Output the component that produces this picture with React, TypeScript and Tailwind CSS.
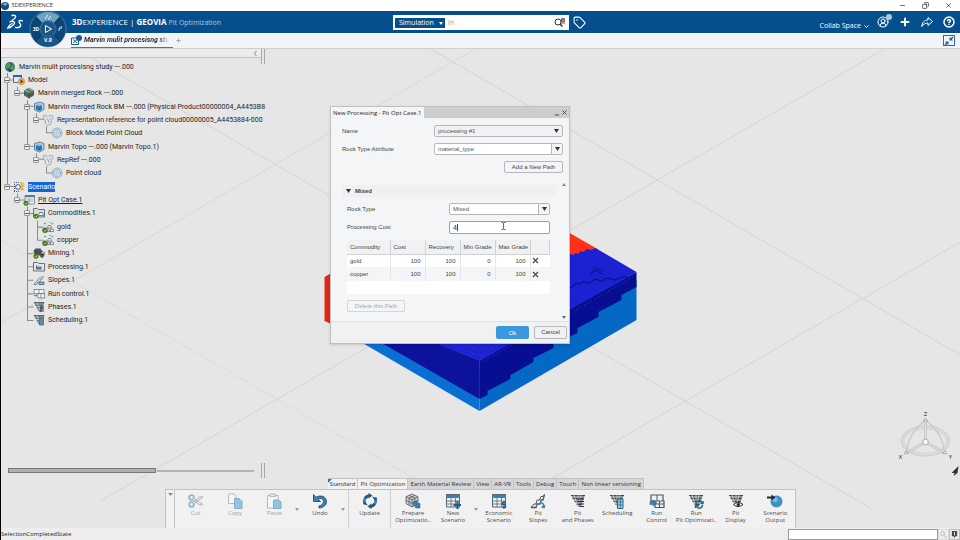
import React from "react";
import { Minus, Copy, X, Plus, Tag, CircleUserRound, CircleHelp } from "lucide-react";

type IconProps = { name: string; className?: string };

function Check() {
  return (
    <g>
      <circle cx="3" cy="9.3" r="2.5" fill="#3d7a1c" />
      <path d="M1.8 9.3l1 1 1.6-2" stroke="#d6e85a" strokeWidth=".9" fill="none" />
    </g>
  );
}

function TreeIcon({ name, className }: IconProps) {
  return (
    <svg viewBox="0 0 12 12" className={className} aria-hidden="true">
      {name === "globe" && (
        <g>
          <circle cx="6" cy="6" r="5" fill="#2b6e8c" />
          <path d="M2 4l3-2 2 2-2 3-3 0zM7 6l3-3 1 4-3 3-2-1z" fill="#5f9a3c" />
          <path d="M4 8l2 3 2-2z" fill="#16384a" />
        </g>
      )}
      {name === "model" && (
        <g>
          <path d="M.5 1.5h8v7h-8z" fill="#dcebf7" stroke="#3b78b4" />
          <path d="M0 1h9v2H0z" fill="#1e63c0" />
          <circle cx="8.5" cy="7.5" r="3.2" fill="#f6b13c" stroke="#c27a1c" strokeWidth=".6" />
          <path d="M7.5 5.6l3 1.9-3 1.9z" fill="#27446a" />
        </g>
      )}
      {name === "rock" && (
        <g>
          <path d="M6 .8l5 2.700v5L6 11.400 1 8.500v-5z" fill="#5c6b60" />
          <path d="M6 .8l5 2.700L6 6 1 3.500z" fill="#87a87c" />
          <path d="M6 6v5.400M1 6l5 2.700L11 6M3.500 2.200l5 2.600" stroke="#27332d" strokeWidth=".7" fill="none" />
          <circle cx="4" cy="7" r="1.700" fill="#2f7595" />
        </g>
      )}
      {name === "cube" && (
        <g>
          <path d="M1.500 2.500L7 1l4 1.500v6L6.500 11 1.500 9z" fill="#b9cedc" stroke="#566f80" strokeWidth=".8" />
          <path d="M3 4h6v4.500L6.500 10 3 8.500z" fill="#2878b4" />
          <path d="M3 4l3-1.500L9 4 6 5.200z" fill="#8cc4e8" />
        </g>
      )}
      {name === "rep" && (
        <g fill="#e3e6e8" stroke="#8f979d" strokeWidth=".7">
          <path d="M1.500 1.500l2.500-.5 1.500 2L8 1.500h2.500L11 4.500 9 7v3l-4 1.500L3 9.500l1-2.500-2-1z" />
          <path d="M4 4.500l2.500 2L9.500 4M6.500 6.500V9" fill="none" />
        </g>
      )}
      {name === "cloud" && (
        <g>
          <circle cx="6" cy="6" r="5" fill="#d5e1ea" stroke="#7b9aaf" strokeWidth=".7" />
          <circle cx="6" cy="6" r="3.400" fill="none" stroke="#5f87a3" strokeWidth="1" strokeDasharray="1 1" />
          <path d="M3.500 6h5M6 3.500v5" stroke="#84a5ba" strokeWidth=".8" strokeDasharray="1 1" />
        </g>
      )}
      {name === "scenario" && (
        <g>
          <path d="M1 1.500h5M1 10.500h5M1.500 1v10" stroke="#4c5a68" strokeDasharray="1 1" fill="none" />
          <circle cx="5" cy="6" r="2.400" fill="#e8f0f8" stroke="#2867a5" />
          <path d="M7 1l4 .5-1 2 2 .5-2 2.500 1.500 2L8 10 7 7l1.500-1z" fill="#f0b43c" />
        </g>
      )}
      {name === "case" && (
        <g>
          <path d="M2 1.500h9.500v8.500H2z" fill="#eef2f4" stroke="#6c7b86" strokeWidth=".8" />
          <path d="M2 1h10v2.200H2z" fill="#4c7f9c" />
          <path d="M3.500 5h7M3.500 7h7M6 4v5" stroke="#8b98a1" strokeWidth=".7" />
          <Check />
        </g>
      )}
      {name === "commodity" && (
        <g>
          <path d="M.5 1.500h4l1 1h6V10H.5z" fill="#d8dee2" stroke="#59666f" strokeWidth=".9" />
          <path d="M5.500 8.500l1-3h3l1 3z" fill="#fff" stroke="#39708f" strokeWidth=".8" />
          <Check />
        </g>
      )}
      {name === "ingot" && (
        <g fill="#eceff1" stroke="#56656f" strokeWidth=".7">
          <path d="M5.500 7l.8-2.500h2.500L9.600 7zM3.500 10.500L4.300 8H7l.8 2.500zM8 10.500L8.800 8h2.400l.8 2.500z" />
          <path d="M2 2.500h2M3 1.500v2M7 1.500h1.600M9.500 2.500h1.500M10.300 1.500v2" stroke="#3d93a0" />
          <Check />
        </g>
      )}
      {name === "truck" && (
        <g>
          <path d="M.5 4l2-2.500h5L9 4l2.500 1v3.500H2z" fill="#4b4f52" />
          <path d="M8.500 5h2.500v1.500H8.500z" fill="#b9c6ce" />
          <circle cx="9" cy="9" r="1.700" fill="#2a2d2f" />
          <circle cx="9" cy="9" r=".6" fill="#ccc" />
          <Check />
        </g>
      )}
      {name === "processing" && (
        <g>
          <path d="M.5 1.500h4l1 1h6V10H.5z" fill="#e3e7ea" stroke="#59666f" strokeWidth=".9" />
          <path d="M3 8.500v-4h1.500v2l2-1.500v1.500l2-1.500v3.500z" fill="#54738a" />
        </g>
      )}
      {name === "slopes" && (
        <g fill="none" stroke="#6c7c88" strokeWidth=".9">
          <path d="M.8 10.500h3l1-2.500h2l1-3h1.500l1-3M.8 10.500L8 2.500" />
          <path d="M6 8h5v2.500H6z" fill="#8fb6ce" stroke="#41708f" />
        </g>
      )}
      {name === "run" && (
        <g fill="#f3f6f8" stroke="#6b7b88" strokeWidth=".8">
          <path d="M1 1.500h10v4H1zM5 5.500h6.500V10H5z" />
          <path d="M6 1.500v4M8 5.500V10" />
          <path d="M1 7.500h3M2.700 6.200L4 7.500 2.700 8.800" stroke="#3f7ca6" fill="none" />
        </g>
      )}
      {(name === "phases" || name === "scheduling") && (
        <g>
          <path d="M.5 1h11L8.500 10.500H6z" fill="#56636c" />
          <path d="M1.500 3h9M3 5.500h7M5 8h4M4 1.500l3 8" stroke="#d5dbdf" strokeWidth=".7" />
          {name === "scheduling" ? (
            <path d="M6.500 4h4v7h-4z" fill="#5e8dab" stroke="#2f5a77" strokeWidth=".6" />
          ) : (
            <path d="M7 6h4M7 8h4M7 10h4" stroke="#2d3438" strokeWidth="1" />
          )}
        </g>
      )}
    </svg>
  );
}

type Node = { label: string; icon: string; pad: string; open?: boolean; state?: "selected" | "active" };

const nodes: Node[] = [
  { label: "Marvin mulit procesisng study ---.000", icon: "globe", pad: "pl-[3px]" },
  { label: "Model", icon: "model", pad: "pl-[3px]", open: true },
  { label: "Marvin merged Rock ---.000", icon: "rock", pad: "pl-[13px]", open: true },
  { label: "Marvin merged Rock BM ---.000 (Physical Product00000004_A4453B8", icon: "cube", pad: "pl-[23px]", open: true },
  { label: "Representation reference for point cloud00000005_A4453884-000", icon: "rep", pad: "pl-8", open: true },
  { label: "Block Model Point Cloud", icon: "cloud", pad: "pl-[50px]" },
  { label: "Marvin Topo ---.000 (Marvin Topo.1)", icon: "cube", pad: "pl-[23px]", open: true },
  { label: "RepRef ---.000", icon: "rep", pad: "pl-8", open: true },
  { label: "Point cloud", icon: "cloud", pad: "pl-[50px]" },
  { label: "Scenario", icon: "scenario", pad: "pl-[3px]", open: true, state: "selected" },
  { label: "Pit Opt Case.1", icon: "case", pad: "pl-[13px]", open: true, state: "active" },
  { label: "Commodities.1", icon: "commodity", pad: "pl-[23px]", open: true },
  { label: "gold", icon: "ingot", pad: "pl-[41px]" },
  { label: "copper", icon: "ingot", pad: "pl-[41px]" },
  { label: "Mining.1", icon: "truck", pad: "pl-8" },
  { label: "Processing.1", icon: "processing", pad: "pl-8" },
  { label: "Slopes.1", icon: "slopes", pad: "pl-8" },
  { label: "Run control.1", icon: "run", pad: "pl-8" },
  { label: "Phases.1", icon: "phases", pad: "pl-8" },
  { label: "Scheduling.1", icon: "scheduling", pad: "pl-8" },
];

const stateClass = {
  selected: "bg-[#1565d8] text-white",
  active: "underline",
  none: "",
};

function Tree() {
  return (
    <div className="relative h-[267px] shrink-0">
      <svg className="absolute left-0 top-0 h-[267px] w-[80px]" viewBox="0 0 80 266" preserveAspectRatio="none" aria-hidden="true">
        <path
          d="M6.500 13V126M6.500 20h8M16.500 27v6M16.500 33h8M26.500 40v46M26.500 46h8M26.500 86h8M35.500 53v6h8M45.500 66v6.500h7M35.500 93v6h8M45.500 106v6.500h7M6.500 126h8M16.500 133v6.500h8M26.500 146v113.500h6M26.500 153h8M36.500 160v19.500h6M36.500 166.500h6M26.500 193h6M26.500 206h6M26.500 219.500h6M26.500 233h6M26.500 246h6"
          stroke="#8d8d8d"
          fill="none"
        />
      </svg>
      <ul className="relative flex h-full flex-col font-['Roboto',sans-serif] text-[7px] text-[#1e1e1e]">
        {nodes.map((n) => (
          <li key={n.label} className={"flex flex-1 items-center gap-[3px] whitespace-nowrap " + n.pad}>
            {n.open && (
              <button
                aria-label={"Collapse " + n.label}
                className="flex h-[6px] w-[6px] shrink-0 items-center justify-center rounded-[1px] border border-[#999] bg-[#eee]"
              >
                <span className="h-px w-[4px] bg-[#666]" />
              </button>
            )}
            <TreeIcon name={n.icon} className="h-[12px] w-[12px] shrink-0" />
            <span className={"leading-[10px] " + stateClass[n.state ?? "none"]}>{n.label}</span>
          </li>
        ))}
      </ul>
    </div>
  );
}

function Scene() {
  return (
    <svg className="absolute inset-0 h-full w-full" viewBox="0 49 960 479" preserveAspectRatio="xMidYMid slice" aria-hidden="true">
      <g stroke="#cfcfcf" strokeWidth=".8" fill="none">
        <path d="M0 240L420 482" stroke="#d9d9d9" />
        <path d="M75 49L870 508" />
        <path d="M430 49L960 355" />
        <path d="M475 49L0 323" stroke="#d4d4d4" />
        <path d="M884 49L100 501" />
        <path d="M960 242L545 482" />
      </g>
      <path d="M324 277l70-40v115l-70-31z" fill="#e02814" />
      <path d="M480 182l117 67-12 10-60 10z" fill="#ff3219" />
      <path d="M335 328l27 15 117 68V345z" fill="#0a6fd3" />
      <path d="M636 280v40l-157 91V370z" fill="#0468c4" />
      <path d="M370 337l13 7 96 55V355l-41-20z" fill="#0c129c" />
      <path d="M636 272V287L621 295V300L598 312V317L577 328V333L553 344V348L533 358V362L510 375V379L487 391V395L479 399V358z" fill="#080e92" />
      <path d="M420 325L570 254l3 1 2-2 3 1 2-3 3 1 3-3 4 1 5-2 41 24L479 361 438 344z" fill="#1c22d2" />
      <path d="M570 288l6-5 3 1 4-2 6 1 5-4 7 2 5-3 9 2 6-3 9 1" stroke="#0c1290" strokeWidth="1.300" fill="none" />
      <path d="M592 267l10 4M594 270l8 4M590 275l4-5" stroke="#0c1290" strokeWidth="1.300" fill="none" />
      <path d="M482 361l88-48 64-37" stroke="#4a53b8" strokeWidth=".8" strokeDasharray="1 3" fill="none" />
      <path d="M440 345l39 15 22-12M452 345l27 11 18-10M464 345l15 6 12-6" stroke="#3c45de" strokeWidth=".8" strokeDasharray="1 2" fill="none" />
      <g fill="none" stroke="#cacaca">
        <ellipse cx="925" cy="441" rx="23" ry="14" strokeWidth="3" stroke="#dadada" />
        <ellipse cx="925" cy="441" rx="24" ry="15" strokeWidth=".6" stroke="#c6c6c6" />
        <ellipse cx="925" cy="441" rx="21" ry="12" strokeWidth=".6" stroke="#cecece" />
        <path d="M925 420q-18 14-19 33M925 420q18 14 19 33" strokeWidth="1.500" />
        <path d="M925 442v-21M925 442l-19 11M925 442l19 11" strokeWidth="3" />
        <path d="M925 442v-21M925 442l-19 11M925 442l19 11" strokeWidth="1" stroke="#e0e0e0" />
      </g>
      <g fill="#fff" stroke="#999" strokeWidth=".8">
        <circle cx="925" cy="442" r="2.800" />
        <path d="M923 421l2-3 2 3zM904 454l1-3 3 2zM946 454l-1-3-3 2z" />
      </g>
      <g fontFamily="Open Sans, sans-serif" fontSize="6" fill="#222" textAnchor="middle">
        <text x="925" y="416">Z</text>
        <text x="900" y="459">X</text>
        <text x="950" y="459">Y</text>
      </g>
      <path d="M958 466l-7 7 3 0-1 3 4-3z" fill="#333" />
    </svg>
  );
}

function Field({ id, value, className }: { id: string; value: string; className: string }) {
  const split = id !== "name";
  return (
    <div className={"relative flex h-[12px] rounded-[2px] border border-[#b4b8bc] " + className}>
      <select id={id} defaultValue={value} className="w-full appearance-none bg-transparent pl-[3px] pr-4 text-[6px] leading-[10px] text-[#555] outline-none">
        <option>{value}</option>
      </select>
      <span className={"pointer-events-none absolute inset-y-0 right-0 flex w-[11px] items-center justify-center " + (split ? "border-l border-[#b4b8bc] bg-[#f4f5f6]" : "")}>
        <svg viewBox="0 0 5 4" className="h-[4px] w-[5px]" aria-hidden="true">
          <path d="M0 0h5L2.500 4z" fill="#333" />
        </svg>
      </span>
    </div>
  );
}

const rows = [
  ["gold", "100", "100", "0", "100"],
  ["copper", "100", "100", "0", "100"],
];

function Dialog() {
  return (
    <section
      role="dialog"
      aria-label="New Processing - Pit Opt Case.1"
      className="absolute left-[329px] top-[57px] w-[240px] border border-[#bfc1c3] bg-[#f4f5f7] font-['Liberation_Sans',Arial,sans-serif] text-[6px] leading-[12px] text-[#444] shadow-sm"
    >
      <header className="flex h-[11px] items-center bg-[#cbcdcf] font-['Open_Sans',sans-serif]">
        <h2 className="flex h-full items-center bg-[#f4f5f7] pl-[2px] pr-[3px] text-[#222]">New Processing - Pit Opt Case.1</h2>
        <button aria-label="Minimize dialog" className="ml-auto"><Minus className="mt-1 h-[6px] w-[6px]" strokeWidth={4} /></button>
        <button aria-label="Close dialog" className="mx-px"><X className="h-[7px] w-[7px]" strokeWidth={3} /></button>
      </header>
      <div className="flex flex-col pb-[9px] pl-[11px] pr-[6px] pt-[7px]">
        <div className="flex justify-between">
          <label htmlFor="name">Name</label>
          <Field id="name" value="processing #1" className="w-[129px] bg-[#f0f1f2]" />
        </div>
        <div className="mt-[6px] flex justify-between">
          <label htmlFor="attr">Rock Type Attribute</label>
          <Field id="attr" value="material_type" className="w-[129px] bg-white" />
        </div>
        <button className="mt-[6px] h-[12px] w-[59px] self-end rounded-[2px] border border-[#b4b8bc] leading-[10px]">Add a New Path</button>
        <div className="relative mr-[7px] mt-[12px]">
          <svg viewBox="0 0 4 3" className="absolute -right-[10px] -top-[2px] h-[3px] w-[4px]" aria-hidden="true"><path d="M0 3l2-3 2 3z" fill="#888" /></svg>
          <svg viewBox="0 0 4 3" className="absolute -bottom-[7px] -right-[10px] h-[3px] w-[4px]" aria-hidden="true"><path d="M0 0l2 3 2-3z" fill="#666" /></svg>
          <button className="flex h-[12px] w-full items-center gap-1 bg-[#eff0f1] pl-1 font-bold">
            <svg viewBox="0 0 5 4" className="h-[4px] w-[5px]" aria-hidden="true"><path d="M0 0h5L2.500 4z" fill="#333" /></svg>
            Mixed
          </button>
          <div className="flex flex-col gap-[6px] pl-[5px] pr-[6px] pt-[6px]">
            <div className="flex justify-between">
              <label htmlFor="rock">Rock Type</label>
              <Field id="rock" value="Mixed" className="w-[101px] bg-white" />
            </div>
            <div className="flex justify-between">
              <label htmlFor="cost">Processing Cost</label>
              <div className="relative">
                <input id="cost" defaultValue="4" className="block h-[13px] w-[101px] rounded-[2px] border border-[#7ba9c4] bg-white px-[3px] text-[7px] text-[#333] outline-none" />
                <span className="absolute left-[8px] top-[3px] h-[7px] w-px bg-[#444]" />
                <svg viewBox="0 0 5 8" className="absolute left-[52px] top-[1px] h-[8px] w-[5px]" aria-hidden="true"><path d="M.5.500h1.500l.5.500.5-.5h1.500M2.500 1v6M.5 7.500h1.500l.5-.5.5.500h1.500" stroke="#444" strokeWidth=".8" fill="none" /></svg>
              </div>
            </div>
            <table className="w-full table-fixed border-collapse">
              <colgroup>
                <col className="w-[43px]" /><col className="w-[35px]" /><col className="w-[35px]" /><col className="w-[35px]" /><col className="w-[35px]" /><col />
              </colgroup>
              <thead>
                <tr className="h-[14px] border-b border-[#cfd1d3] bg-[#f0f1f2] text-left">
                  {["Commodity", "Cost", "Recovery", "Min Grade", "Max Grade"].map((h) => (
                    <th key={h} scope="col" className="whitespace-nowrap border-r border-[#cfd1d3] p-0 pl-[3px] font-normal">{h}</th>
                  ))}
                  <td className="border-r border-[#cfd1d3] p-0" />
                </tr>
              </thead>
              <tbody>
                {rows.map((r, i) => (
                  <tr key={r[0]} className={i === 0 ? "h-[13px] bg-white" : "h-[14px] bg-[#f4f5f7]"}>
                    {r.map((c, j) => (
                      <td key={j} className={"border-r border-[#e4e6e8] p-0 " + (j === 0 ? "pl-[3px]" : "pr-[4px] text-right")}>{c}</td>
                    ))}
                    <td className="p-0">
                      <button aria-label={"Remove " + r[0]} className="flex text-[#444]"><X className="h-[9px] w-[9px]" strokeWidth={3} /></button>
                    </td>
                  </tr>
                ))}
                <tr className="h-[13px] bg-white"><td colSpan={6} className="p-0" /></tr>
              </tbody>
            </table>
            <button disabled className="h-[12px] w-[58px] rounded-[2px] border border-[#d4d7d9] leading-[10px] text-[#a5a8ab]">Delete this Path</button>
          </div>
        </div>
      </div>
      <footer className="flex h-[22px] items-center justify-end gap-[5px] border-t border-[#dfe1e3] bg-[#f1f1f2] pr-[2px]">
        <button className="h-[13px] w-[33px] rounded-[2px] bg-[#3a98dc] text-white">Ok</button>
        <button className="h-[13px] w-[33px] rounded-[2px] border border-[#b4b8bc] leading-[11px]">Cancel</button>
      </footer>
    </section>
  );
}

function Pit() {
  return (
    <g>
      <path d="M1 2h14l-4 12H8z" fill="#8a9298" />
      <path d="M1 2.500h14M2.500 5.500h11M4.500 8.500h8M6.500 11.500h5" stroke="#3f474c" fill="none" />
      <path d="M4 2l4 12M8 2v4M11 2l-2 8" stroke="#e0e4e6" strokeWidth=".7" fill="none" />
    </g>
  );
}

function ActionIcon({ name, className }: IconProps) {
  return (
    <svg viewBox="0 0 16 16" className={className} aria-hidden="true">
      {name === "cut" && (
        <g fill="none">
          <circle cx="3.500" cy="4.500" r="2.300" stroke="#8db9d2" strokeWidth="1.800" />
          <circle cx="3.500" cy="11.500" r="2.300" stroke="#8db9d2" strokeWidth="1.800" />
          <path d="M5.500 5.500L15 11.500l-3 .5L5 7.500M5.500 10.500L15 4l-3-.2L5 9" stroke="#adb3b7" fill="#f0f1f2" />
        </g>
      )}
      {name === "copy" && (
        <g>
          <path d="M1.500 1h5.500l2 2v7.500H1.500z" fill="#f5f6f7" stroke="#b5babd" />
          <path d="M7.500 5.500h5l2.500 2.500v7.500H7.500z" fill="#94c3de" stroke="#7eaecb" />
          <path d="M12.500 5.500V8H15" fill="#d8eaf4" stroke="#7eaecb" strokeWidth=".7" />
        </g>
      )}
      {name === "paste" && (
        <g>
          <path d="M1.500 2.500H12V15H1.500z" fill="#f5f6f7" stroke="#b5babd" />
          <path d="M4 1h5.500v2.500H4z" fill="#e4e6e8" stroke="#b5babd" />
          <path d="M7.500 7h5l2.500 2v6.500H7.500z" fill="#94c3de" stroke="#7eaecb" />
        </g>
      )}
      {name === "undo" && (
        <path d="M1.500 1.500v7h7L6 6.300C9 4.500 11.500 6 11.500 8.500S9.500 12.500 7 13v2c4.500-.3 7.500-3 7.500-6.500C14.500 3.500 8.500 1.500 4 4.300z" fill="#3784b3" stroke="#1f4f70" strokeWidth=".9" />
      )}
      {name === "update" && (
        <g fill="none" strokeWidth="3">
          <path d="M3 11A5.400 5.400 0 0 1 4.500 4M13 5A5.400 5.400 0 0 1 11.500 12" stroke="#3784b3" />
          <path d="M3.500 5A5.400 5.400 0 0 1 7 2.600M12.500 11A5.400 5.400 0 0 1 9 13.400" stroke="#27546f" />
          <path d="M6.500 0l4 2.600-4 3zM9.500 16l-4-2.600 4-3zM10 3.500l5 1.500-1.500 3zM6 12.500L1 11l1.500-3z" fill="#27546f" />
        </g>
      )}
      {name === "prepare" && (
        <g>
          <path d="M7 1l6 2.700v7L7 14 1 10.700v-7z" fill="#c9ced1" stroke="#586066" strokeWidth=".8" />
          <path d="M1 3.700l6 3 6-3M7 6.700V14M1 7.200l6 3.300 6-3.300M4 2.300l6 3v7M10 2.300l-6 3v7" fill="none" stroke="#586066" strokeWidth=".8" />
          <path d="M8.500 8.500h3.500v2h3v4.500h-4.500v-2h-2z" fill="#3784b3" stroke="#27546f" strokeWidth=".5" />
        </g>
      )}
      {(name === "new" || name === "economic") && (
        <g>
          <path d="M1.500 2h13v12h-13z" fill="#eef1f3" stroke="#5a656d" />
          <path d="M1 1h14v4H1z" fill="#3784b3" />
          <path d="M1 1h14v1H1z" fill="#5a656d" />
          <path d="M1.500 8h13M1.500 11h13M6 5v9M10.500 5v9" stroke="#5a656d" strokeWidth=".8" />
          {name === "new" ? (
            <path d="M12.500 8v8M8.500 12h8" stroke="#1d5f8d" strokeWidth="2.200" />
          ) : (
            <path d="M15 9.500h-3.500v2.200h3v2.800H11M13 8v8" fill="none" stroke="#1d5f8d" strokeWidth="1.200" />
          )}
        </g>
      )}
      {name === "slopes" && (
        <g fill="none" stroke="#50585e">
          <path d="M1 14.500h5l1-3.500h3l1-4h2l1.500-5.500" strokeWidth="1.300" />
          <path d="M1 14.500L4 11h2L7 7h2.500L11 3.500h2l1.500-2" />
          <path d="M10 9.500c3 0 4 2 3.500 5M11.500 14l2.500.5.500-2.500" stroke="#3784b3" strokeWidth="1.700" />
        </g>
      )}
      {name === "phases" && (
        <g><Pit /><path d="M7 6h7M8 8.500h6M9 11h5M10 13.500h4" stroke="#30363a" strokeWidth="1.200" /></g>
      )}
      {name === "scheduling" && (
        <g><Pit /><path d="M8.500 6h5.500v9.500H8.500z" fill="#a8cbe0" stroke="#2d698f" /><path d="M8.500 9h5.500M8.500 12h5.500M11.300 6v9" stroke="#2d698f" strokeWidth=".8" /></g>
      )}
      {name === "run" && (
        <g>
          <path d="M2 2h12v6H2zM6 8h9v6.500H6z" fill="#eef1f3" stroke="#50585e" strokeWidth="1.200" />
          <path d="M8 2v6M10.500 8v6.500M6 11h9" stroke="#50585e" />
          <path d="M1 8.500h3V7l4 3-4 3v-1.500H1z" fill="#3784b3" stroke="#1d5f8d" strokeWidth=".5" />
        </g>
      )}
      {name === "runpit" && (
        <g><Pit /><path d="M8 11a3.200 3.200 0 0 1 6-1.500M15 8v2.500h-2.500M14.500 12a3.200 3.200 0 0 1-6 1.500M7.500 15v-2.500H10" fill="none" stroke="#1d5f8d" strokeWidth="1.400" /></g>
      )}
      {name === "display" && (
        <g><Pit /><path d="M5.500 11.500q4.500-4 9.500 0-5 4-9.500 0z" fill="#fff" stroke="#222" /><circle cx="10.300" cy="11.500" r="1.600" fill="#222" /></g>
      )}
      {name === "output" && (
        <g>
          <circle cx="9.500" cy="8.500" r="6" fill="#3f93c4" />
          <circle cx="8" cy="6.500" r="2.500" fill="#7fc0e2" />
          <path d="M0 3.500h4.500V1.500L8.500 4.500 4.500 7.500V5.500H0z" fill="#23292d" />
        </g>
      )}
    </svg>
  );
}

function Action({ icon, lines, dim }: { icon: string; lines: string[]; dim?: boolean }) {
  return (
    <button className={"flex w-full flex-col items-center whitespace-nowrap pt-[3px] leading-[7px] " + (dim ? "text-[#a3a3a3]" : "text-[#4c4c4c]")}>
      <ActionIcon name={icon} className="mb-px h-4 w-4" />
      {lines.map((l) => (
        <span key={l}>{l}</span>
      ))}
    </button>
  );
}

function More({ label }: { label: string }) {
  return (
    <button aria-label={label} className="flex w-[6px] shrink-0 items-center justify-center">
      <svg viewBox="0 0 4 3" className="h-[3px] w-[4px]" aria-hidden="true"><path d="M0 0h4L2 3z" fill="#999" /></svg>
    </button>
  );
}

const tabs = ["Standard", "Pit Optimization", "Earth Material Review", "View", "AR-VR", "Tools", "Debug", "Touch", "Non linear versioning"];

function ActionBar() {
  return (
    <div className="relative flex flex-col items-center text-[6px]">
      <div role="tablist" className="ml-[11px] flex h-[11px]">
        {tabs.map((t, i) => (
          <button
            key={t}
            role="tab"
            aria-selected={i === 1}
            className={"relative whitespace-nowrap border-r border-t border-[#c2c2c2] px-[2px] leading-[10px] text-[#333] " + (i < 2 ? "bg-[#f1f1f1]" : "bg-[#d6d6d6]")}
          >
            {i === 0 && (
              <svg viewBox="0 0 4 4" className="absolute left-0 top-0 h-[4px] w-[4px]" aria-hidden="true"><path d="M0 0h4L0 4z" fill="#2f78ab" /></svg>
            )}
            {t}
          </button>
        ))}
      </div>
      <div className="flex h-[39px] border-x border-t border-[#c2c2c2] bg-[#f1f1f1]">
        <button aria-label="Collapse bar" className="flex w-[9px] justify-center border-r border-[#c2c2c2] pt-[3px]">
          <svg viewBox="0 0 5 3" className="h-[3px] w-[5px]" aria-hidden="true"><path d="M0 0l2.500 3L5 0z" fill="#888" /></svg>
        </button>
        <div className="ml-[1px] grid w-[118px] grid-cols-3">
          <Action icon="cut" lines={["Cut"]} dim />
          <Action icon="copy" lines={["Copy"]} dim />
          <Action icon="paste" lines={["Paste"]} dim />
        </div>
        <More label="Paste options" />
        <div className="flex w-10"><Action icon="undo" lines={["Undo"]} /></div>
        <More label="Undo options" />
        <div className="ml-[2px] mr-[2px] flex w-[43px] border-x border-[#cfcfcf]"><Action icon="update" lines={["Update"]} /></div>
        <div className="grid w-20 grid-cols-2">
          <Action icon="prepare" lines={["Prepare", "Optimizatio.."]} />
          <Action icon="new" lines={["New", "Scenario"]} />
        </div>
        <More label="New scenario options" />
        <div className="grid w-[316px] grid-cols-8">
          <Action icon="economic" lines={["Economic", "Scenario"]} />
          <Action icon="slopes" lines={["Pit", "Slopes"]} />
          <Action icon="phases" lines={["Pit", "and Phases"]} />
          <Action icon="scheduling" lines={["Scheduling"]} />
          <Action icon="run" lines={["Run", "Control"]} />
          <Action icon="runpit" lines={["Run", "Pit Optimizati.."]} />
          <Action icon="display" lines={["Pit", "Display"]} />
          <Action icon="output" lines={["Scenario", "Output"]} />
        </div>
      </div>
    </div>
  );
}

function Compass() {
  return (
    <svg viewBox="0 0 38 38" className="absolute left-[28px] top-[10px] z-10 h-[38px] w-[38px]" role="img" aria-label="Compass">
      <circle cx="19" cy="19" r="18" fill="#0d4674" stroke="#6f9dbd" strokeWidth=".6" />
      <path d="M7 7a17 17 0 0 1 24 0l-6 6a8.500 8.500 0 0 0-12 0z" fill="#6fa3c4" />
      <path d="M7 31a17 17 0 0 0 24 0l-6-6a8.500 8.500 0 0 1-12 0z" fill="#16578a" />
      <path d="M6.500 6.500l6 6M31.500 6.500l-6 6M6.500 31.500l6-6M31.500 31.500l-6-6" stroke="#083255" />
      <circle cx="19" cy="19" r="8" fill="#1a5688" stroke="#3d78a5" strokeWidth=".8" />
      <path d="M16.500 15.500l6 3.500-6 3.500z" fill="none" stroke="#fff" />
      <g fontFamily="Open Sans, sans-serif" fontSize="5" fontWeight="bold" fill="#fff" textAnchor="middle">
        <text x="7" y="21">3D</text>
        <text x="19" y="32">V.R</text>
        <text x="31" y="21" fontStyle="italic">i²</text>
      </g>
      <path d="M16 9c2-1 1-3 3-4M19 10c2-1 1-3 3-4" stroke="#e5f1f8" fill="none" />
    </svg>
  );
}

function Grip() {
  return <span className="h-[15px] w-[4px] shrink-0 border-x border-[#a8a8a8]" />;
}

export default function App() {
  return (
    <div className="relative flex h-screen flex-col overflow-hidden border-l border-black bg-[#e6e6e6] font-['Open_Sans',sans-serif]">
      <div className="flex h-[11px] shrink-0 items-center bg-white text-[6px] text-[#333]">
        <svg viewBox="0 0 8 8" className="mr-[2px] h-[8px] w-[8px]" aria-hidden="true"><circle cx="4" cy="4" r="4" fill="#12507f" /><path d="M1.500 2a3.500 3.500 0 0 1 5 0L4 4z" fill="#78acd0" /></svg>
        3DEXPERIENCE
        <div className="ml-auto flex items-center gap-4 pr-[8px] text-black">
          <button aria-label="Minimize"><Minus className="h-[7px] w-[7px]" /></button>
          <button aria-label="Restore"><Copy className="h-[7px] w-[7px] -scale-x-100" /></button>
          <button aria-label="Close"><X className="h-[7px] w-[7px]" /></button>
        </div>
      </div>
      <Compass />
      <header className="relative flex h-[22px] shrink-0 items-center bg-[#05508c] text-[8px] text-white">
        <svg viewBox="0 0 16 17" className="ml-[6px] h-[17px] w-[16px]" role="img" aria-label="Dassault Systemes">
          <path d="M5 1.500c3-.8 4.500.5 3 2.500C7 5.500 5 6.500 3 8M5.500 7.500c2.500 0 2.500 1.500 1 3.200-1.500 1.700-4 3-5.800 3.300C1.500 12 3 10.500 5 9.500M15.500 7c-1.800-.9-3.500-.7-3.500.7 0 1.800 2 1.800 1.700 3.600-.3 1.700-2.700 2.500-5 2.200" stroke="#fff" strokeWidth="1.300" fill="none" strokeLinecap="round" />
        </svg>
        <h1 className="ml-[49px] whitespace-nowrap">
          <b>3D</b>EXPERIENCE | <b>GEOVIA</b> <span className="text-[7px] text-[#a9c9e0]">Pit Optimization</span>
        </h1>
        <form className="absolute left-[392px] top-[4px] flex h-[15px] w-[176px] items-center bg-white p-[2px]">
          <div className="relative flex h-[10px] w-[50px] items-center bg-[#05508c]">
            <select aria-label="Search scope" className="w-full appearance-none bg-transparent pl-[4px] text-[7px] leading-[10px] text-white outline-none">
              <option>Simulation</option>
            </select>
            <svg viewBox="0 0 4 3" className="pointer-events-none absolute right-[2px] top-[4px] h-[3px] w-[4px]" aria-hidden="true"><path d="M0 0h4L2 3z" fill="#fff" /></svg>
          </div>
          <input aria-label="Search" placeholder="In" className="min-w-0 flex-1 pl-[3px] text-[7px] leading-[10px] outline-none placeholder:text-[#999]" />
          <button aria-label="Run search" type="button">
            <svg viewBox="0 0 11 9" className="mr-[2px] h-[9px] w-[11px]" aria-hidden="true"><circle cx="4" cy="4" r="3" fill="none" stroke="#333" /><path d="M6 6l2.500 2.500" stroke="#333" strokeWidth="1.500" /><path d="M7 1h4M7 3h4M8 0v4M10 0v4M7 5h4" stroke="#333" strokeWidth=".8" /></svg>
          </button>
        </form>
        <button aria-label="Tags" className="absolute left-[572px] top-[5px]"><Tag className="h-[13px] w-[13px]" /></button>
        <div className="ml-auto flex items-center gap-[10px] pr-[5px]">
          <button className="flex items-center gap-[3px] whitespace-nowrap pt-[9px] text-[7px]">
            Collab Space
            <svg viewBox="0 0 5 3" className="h-[3px] w-[5px]" aria-hidden="true"><path d="M.5.500l2 2 2-2" stroke="#fff" fill="none" /></svg>
          </button>
          <button aria-label="Profile" className="relative -ml-[2px]">
            <CircleUserRound className="h-3 w-3" />
            <span className="absolute -right-[3px] -top-[2px] h-[6px] w-[6px] rounded-full bg-[#b9c4cc]" />
          </button>
          <button aria-label="Add"><Plus className="h-3 w-3" strokeWidth={4} /></button>
          <button aria-label="Share">
            <svg viewBox="0 0 12 12" className="h-3 w-3" aria-hidden="true"><path d="M7 1.500l4.500 4L7 9.500V7C4.500 7 2.500 8 .8 10.500 1 7 3 4 7 4z" fill="none" stroke="#fff" strokeLinejoin="round" /></svg>
          </button>
          <button aria-label="Help"><CircleHelp className="h-3 w-3" strokeWidth={3} /></button>
        </div>
      </header>
      <nav className="flex h-[16px] shrink-0 items-stretch border-b border-[#cfcfd2] bg-[#f3f4f8]">
        <button className="ml-[70px] flex w-[102px] items-center gap-[2px] whitespace-nowrap border-b border-[#2a7fb8] font-['Roboto',sans-serif] text-[7px] font-bold italic text-[#333]">
          <svg viewBox="0 0 11 10" className="h-[10px] w-[11px] shrink-0" aria-hidden="true"><path d="M.5 3h7v6.500h-7z" fill="#fff" stroke="#1d5f8d" /><path d="M2 4.500l4 3.500M6 4.500L2 8" stroke="#1d5f8d" /><circle cx="8" cy="3" r="3" fill="#0f5c96" /></svg>
          <span className="[mask-image:linear-gradient(to_right,black_88%,transparent)]">Marvin mulit procesisng stu</span>
        </button>
        <button aria-label="New tab" className="ml-[2px] text-[#888]"><Plus className="h-[7px] w-[7px]" /></button>
        <button aria-label="Exit full screen" className="my-[2px] ml-auto mr-[5px] flex w-[12px] items-center justify-center border border-[#2a6d9e] text-[#1d5f8d]">
          <svg viewBox="0 0 10 10" className="h-[10px] w-[10px]" aria-hidden="true"><path d="M5.500 1v3.500H9L7.800 3.300 9.500 1.600 8.400.5 6.700 2.200zM4.500 9V5.500H1l1.200 1.200L.5 8.400l1.100 1.100 1.700-1.700z" fill="#1d5f8d" /></svg>
        </button>
      </nav>
      <main className="relative flex min-h-0 flex-1 flex-col">
        <Scene />
        <aside className="relative flex min-h-0 w-[264px] flex-1 flex-col">
          <div className="flex h-[15px] shrink-0 justify-between">
            <div className="flex h-[9px] flex-1 items-center justify-end border-b border-[#c4c4c4] bg-[#ececec] pr-1">
              <button aria-label="Collapse tree" className="flex">
                <svg viewBox="0 0 3 5" className="h-[5px] w-[3px]" aria-hidden="true"><path d="M2.500 0L.5 2.500l2 2.500" stroke="#888" fill="none" /></svg>
              </button>
            </div>
            <Grip />
          </div>
          <div className="-mt-1"><Tree /></div>
          <div className="mt-auto flex items-center">
            <span className="ml-[7px] h-[5px] w-[148px] border border-[#777] bg-[#b0b0b0]" />
            <span className="ml-px h-[2px] w-[97px] bg-[#b4b4b4]" />
            <span className="flex-1" />
            <Grip />
          </div>
        </aside>
        <ActionBar />
        <Dialog />
      </main>
      <footer className="flex h-[12px] shrink-0 items-center bg-[#ededed] text-[6px] text-[#222]">
        <output>SelectionCompletedState</output>
        <input aria-label="Command" className="ml-auto h-[11px] w-[150px] border border-[#999] bg-white" />
        <button aria-label="Find" className="flex h-[11px] w-[11px] items-center justify-center border border-[#ddd]"><svg viewBox="0 0 8 8" className="h-[7px] w-[7px]" aria-hidden="true"><circle cx="3" cy="3" r="2.300" fill="none" stroke="#bbb" /><path d="M5 5l1 2h2" stroke="#bbb" fill="none" /></svg></button>
        <button aria-label="Messages" className="flex h-[11px] w-[11px] items-center justify-center border border-[#bbb]"><svg viewBox="0 0 8 8" className="h-[7px] w-[7px]" aria-hidden="true"><path d="M1 0h6v6H5L4 8 3 6H1z" fill="#444" /><path d="M4 1v4" stroke="#fff" /></svg></button>
      </footer>
    </div>
  );
}
